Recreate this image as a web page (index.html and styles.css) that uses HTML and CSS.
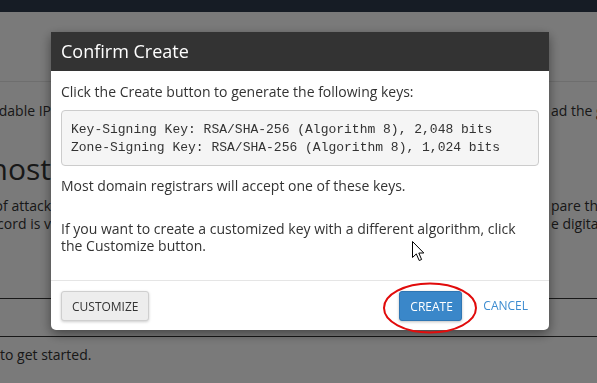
FILE: index.html
```html
<!DOCTYPE html>
<html>
<head>
<meta charset="utf-8">
<link rel="stylesheet" href="styles.css">
</head>
<body>
<div class="page">
  <div class="topbar"></div>
  <div class="pagehead"></div>
  <div class="row row1">
    <div class="left"><span>with a DNSSEC-compatible, upgradable IP</span></div>
    <div class="right"><span>ad the <a href="#">guide</a> for more</span></div>
  </div>
  <div class="row heading">
    <div class="left"><span>DNSSEC for this host</span></div>
    <div class="right"><span></span></div>
  </div>
  <div class="row rowtext">
    <div class="left"><span>This reduces the risk of attack</span></div>
    <div class="right"><span>pare the</span></div>
  </div>
  <div class="row rowtext">
    <div class="left"><span>the DNS record is v</span></div>
    <div class="right"><span>e digital signature</span></div>
  </div>
  <div class="table">
    <div class="thead"></div>
  </div>
  <div class="started">to get started.</div>
</div>

<div class="overlay"></div>

<div class="modal">
  <div class="modal-header">Confirm Create</div>
  <div class="modal-body">
    <p class="p1">Click the Create button to generate the following keys:</p>
    <pre class="keys">Key-Signing Key: RSA/SHA-256 (Algorithm 8), 2,048 bits
Zone-Signing Key: RSA/SHA-256 (Algorithm 8), 1,024 bits</pre>
    <p class="p2">Most domain registrars will accept one of these keys.</p>
    <p class="p3">If you want to create a customized key with a different algorithm, click the Customize button.</p>
  </div>
  <div class="modal-footer">
    <button class="btn btn-default">Customize</button>
    <div class="actions">
      <button class="btn btn-primary">Create</button>
      <a class="btn-link" href="#">Cancel</a>
    </div>
  </div>
</div>

<svg class="highlight" width="96" height="54" viewBox="0 0 96 54">
  <ellipse cx="48" cy="27" rx="46" ry="24.5" fill="none" stroke="#e10b0b" stroke-width="2"/>
</svg>

<svg class="cursor" width="13" height="21" viewBox="0 0 13 21">
  <path d="M0.5 0.5 L0.5 16.5 L4.3 12.9 L7.2 19.5 L9.6 18.5 L6.8 12 L11.8 12 Z" fill="#fff" stroke="#000" stroke-width="1" stroke-linejoin="miter"/>
</svg>
</body>
</html>
```

FILE: styles.css
```css
* { box-sizing: border-box; }
html, body { margin: 0; padding: 0; }
body {
  width: 597px;
  height: 383px;
  overflow: hidden;
  background: #fff;
  font-family: "Open Sans", "Liberation Sans", sans-serif;
  font-size: 14px;
  color: #333;
}
.page { width: 597px; }
.topbar { height: 12px; background: #2e3c4f; }
.pagehead { height: 70px; border-bottom: 1px solid #e6e6e6; background: #fff; }
.row {
  display: flex;
  justify-content: space-between;
  white-space: nowrap;
}
.row .left {
  width: 51px;
  overflow: hidden;
  display: flex;
  justify-content: flex-end;
}
.row .right {
  width: 46px;
  overflow: hidden;
  display: flex;
  justify-content: flex-start;
}
.row1 { margin-top: 19px; line-height: 20px; }
.row1 a { color: #333; text-decoration: underline; }
.heading { margin-top: 31px; font-size: 30px; line-height: 34px; }
.rowtext { line-height: 18px; }
.heading + .rowtext { margin-top: 11px; }
.table {
  margin-top: 65px;
  border-top: 1px solid #333;
  border-bottom: 1px solid #333;
  height: 39px;
}
.started { margin-top: 8px; line-height: 20px; }

.overlay {
  position: fixed;
  inset: 0;
  background: rgba(0, 0, 0, 0.52);
}

.modal {
  position: fixed;
  left: 51px;
  top: 32px;
  width: 498px;
  background: #fff;
  border-radius: 0 0 5px 5px;
  box-shadow: 0 4px 12px rgba(0, 0, 0, 0.45);
}
.modal-header {
  height: 39px;
  background: #333;
  color: #fff;
  font-size: 18px;
  line-height: 39px;
  padding: 0 10px;
}
.modal-body { padding: 12px 10px 26px; }
.modal-body p { margin: 0; line-height: 17px; }
.keys {
  margin: 10px 0 11px;
  padding: 10px 9px 8px;
  background: #f5f5f5;
  border: 1px solid #ccc;
  border-radius: 4px;
  font-family: "Liberation Mono", "DejaVu Sans Mono", monospace;
  font-size: 13px;
  line-height: 18px;
  color: #333;
}
.p2 { margin-bottom: 26px !important; }
.modal-footer {
  border-top: 1px solid #e5e5e5;
  padding: 10px 11px 9px 10px;
  display: flex;
  justify-content: space-between;
  align-items: center;
}
.actions { display: flex; align-items: center; }
.btn {
  height: 30px;
  padding: 0 10px;
  font-family: "Open Sans", "Liberation Sans", sans-serif;
  font-size: 12px;
  text-transform: uppercase;
  border-radius: 3px;
  cursor: pointer;
}
.btn-default {
  width: 88px;
  background: #ededed;
  border: 1px solid #cfcfcf;
  color: #333;
  box-shadow: 0 1px 3px rgba(0, 0, 0, 0.2);
}
.btn-primary {
  width: 63px;
  background: #3a87c9;
  border: 1px solid #2f76b3;
  color: #fff;
  box-shadow: 0 1px 3px rgba(0, 0, 0, 0.25);
}
.btn-link {
  display: block;
  margin-left: 11px;
  padding: 0 10px;
  line-height: 30px;
  font-size: 12px;
  text-transform: uppercase;
  color: #3d8cd0;
  text-decoration: none;
}

.highlight {
  position: fixed;
  left: 382px;
  top: 281px;
}
.cursor {
  position: fixed;
  left: 412px;
  top: 241px;
}
```
